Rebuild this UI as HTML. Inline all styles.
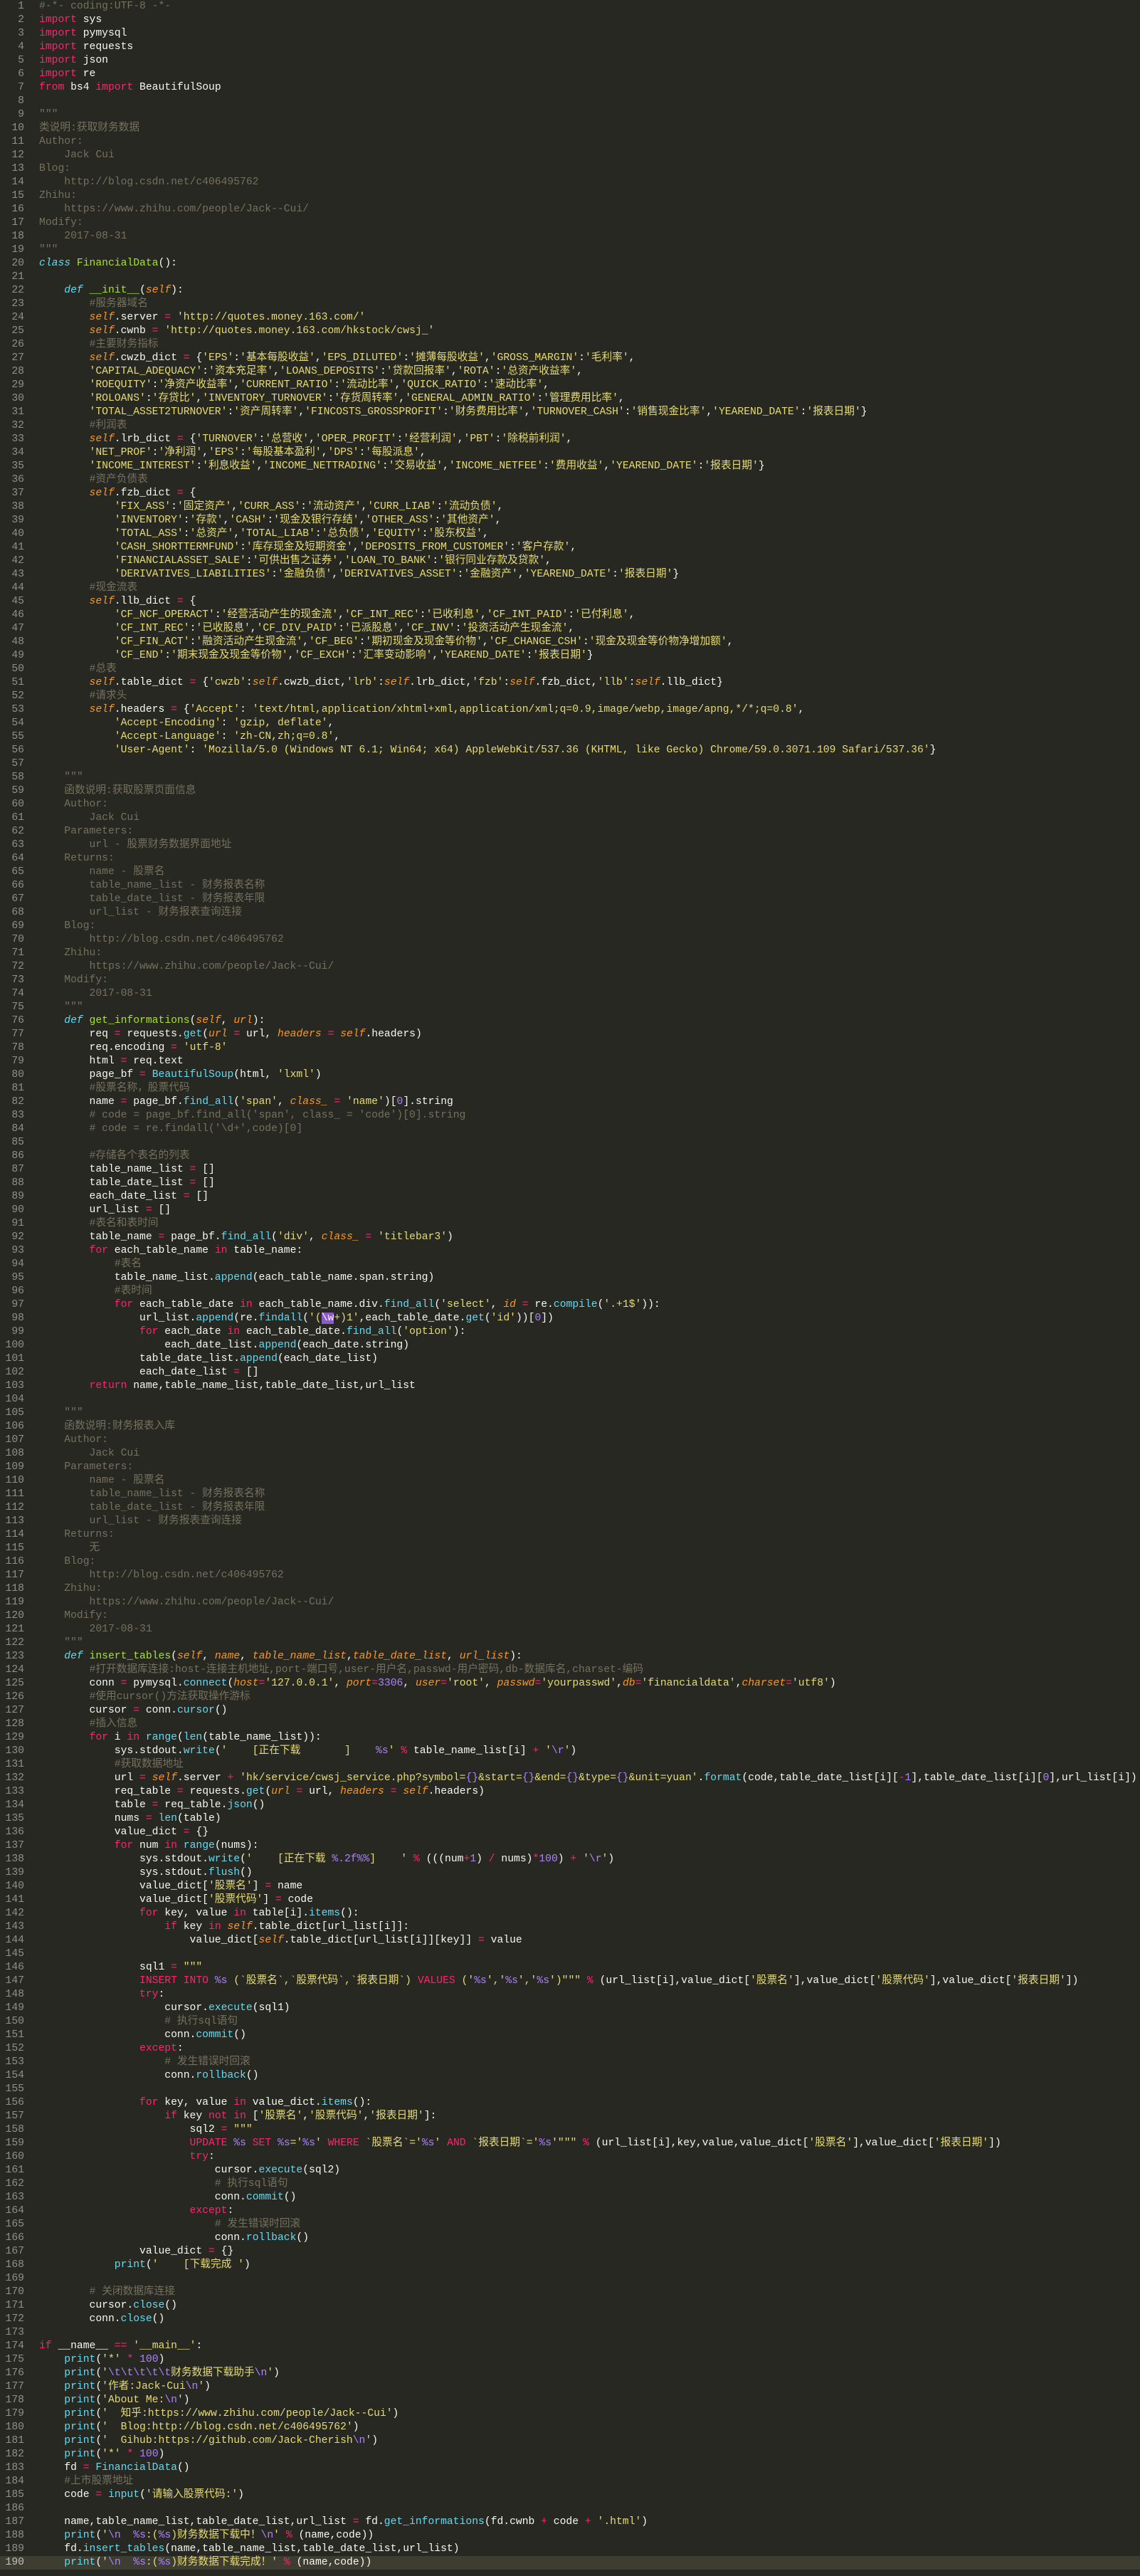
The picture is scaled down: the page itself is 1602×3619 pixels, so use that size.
<!DOCTYPE html>
<html><head><meta charset="utf-8">
<style>
html,body{margin:0;padding:0;background:#272822;}
body{width:1602px;height:3619px;position:relative;overflow:hidden;}
pre{margin:0;font-family:"Liberation Mono","Noto Sans CJK SC",monospace;font-size:14.7px;line-height:19px;position:absolute;top:0;}
#g{left:0;width:34px;text-align:right;color:#8f908a;}
#c{left:55px;color:#f8f8f2;}
#hl{position:absolute;left:0;top:3591px;width:1602px;height:19px;background:#3e3d32;}
.k{color:#f92672}.s{color:#e6db74}.c{color:#75715e}.f{color:#a6e22e}.b{color:#66d9ef}
.sf{color:#fd971f;font-style:italic}.n{color:#ae81ff}.d{color:#66d9ef;font-style:italic}
.sel{background:#8b5cc9;color:#f8f8f2}
</style></head><body>
<div id="hl"></div>
<pre id="g">1
2
3
4
5
6
7
8
9
10
11
12
13
14
15
16
17
18
19
20
21
22
23
24
25
26
27
28
29
30
31
32
33
34
35
36
37
38
39
40
41
42
43
44
45
46
47
48
49
50
51
52
53
54
55
56
57
58
59
60
61
62
63
64
65
66
67
68
69
70
71
72
73
74
75
76
77
78
79
80
81
82
83
84
85
86
87
88
89
90
91
92
93
94
95
96
97
98
99
100
101
102
103
104
105
106
107
108
109
110
111
112
113
114
115
116
117
118
119
120
121
122
123
124
125
126
127
128
129
130
131
132
133
134
135
136
137
138
139
140
141
142
143
144
145
146
147
148
149
150
151
152
153
154
155
156
157
158
159
160
161
162
163
164
165
166
167
168
169
170
171
172
173
174
175
176
177
178
179
180
181
182
183
184
185
186
187
188
189
<span style="color:#c2c2bf">190</span></pre>
<pre id="c"><span class="c">#-*- coding:UTF-8 -*-</span>
<span class="k">import</span> sys
<span class="k">import</span> pymysql
<span class="k">import</span> requests
<span class="k">import</span> json
<span class="k">import</span> re
<span class="k">from</span> bs4 <span class="k">import</span> BeautifulSoup

<span class="c">"""
类说明:获取财务数据
Author:
    Jack Cui
Blog:
    http://blog.csdn.net/c406495762
Zhihu:
    https://www.zhihu.com/people/Jack--Cui/
Modify:
    2017-08-31
"""</span>
<span class="d">class</span> <span class="f">FinancialData</span>():

    <span class="d">def</span> <span class="f">__init__</span>(<span class="sf">self</span>):
        <span class="c">#服务器域名</span>
        <span class="sf">self</span>.server <span class="k">=</span> <span class="s">'http://quotes.money.163.com/'</span>
        <span class="sf">self</span>.cwnb <span class="k">=</span> <span class="s">'http://quotes.money.163.com/hkstock/cwsj_'</span>
        <span class="c">#主要财务指标</span>
        <span class="sf">self</span>.cwzb_dict <span class="k">=</span> {<span class="s">'EPS'</span>:<span class="s">'基本每股收益'</span>,<span class="s">'EPS_DILUTED'</span>:<span class="s">'摊薄每股收益'</span>,<span class="s">'GROSS_MARGIN'</span>:<span class="s">'毛利率'</span>,
        <span class="s">'CAPITAL_ADEQUACY'</span>:<span class="s">'资本充足率'</span>,<span class="s">'LOANS_DEPOSITS'</span>:<span class="s">'贷款回报率'</span>,<span class="s">'ROTA'</span>:<span class="s">'总资产收益率'</span>,
        <span class="s">'ROEQUITY'</span>:<span class="s">'净资产收益率'</span>,<span class="s">'CURRENT_RATIO'</span>:<span class="s">'流动比率'</span>,<span class="s">'QUICK_RATIO'</span>:<span class="s">'速动比率'</span>,
        <span class="s">'ROLOANS'</span>:<span class="s">'存贷比'</span>,<span class="s">'INVENTORY_TURNOVER'</span>:<span class="s">'存货周转率'</span>,<span class="s">'GENERAL_ADMIN_RATIO'</span>:<span class="s">'管理费用比率'</span>,
        <span class="s">'TOTAL_ASSET2TURNOVER'</span>:<span class="s">'资产周转率'</span>,<span class="s">'FINCOSTS_GROSSPROFIT'</span>:<span class="s">'财务费用比率'</span>,<span class="s">'TURNOVER_CASH'</span>:<span class="s">'销售现金比率'</span>,<span class="s">'YEAREND_DATE'</span>:<span class="s">'报表日期'</span>}
        <span class="c">#利润表</span>
        <span class="sf">self</span>.lrb_dict <span class="k">=</span> {<span class="s">'TURNOVER'</span>:<span class="s">'总营收'</span>,<span class="s">'OPER_PROFIT'</span>:<span class="s">'经营利润'</span>,<span class="s">'PBT'</span>:<span class="s">'除税前利润'</span>,
        <span class="s">'NET_PROF'</span>:<span class="s">'净利润'</span>,<span class="s">'EPS'</span>:<span class="s">'每股基本盈利'</span>,<span class="s">'DPS'</span>:<span class="s">'每股派息'</span>,
        <span class="s">'INCOME_INTEREST'</span>:<span class="s">'利息收益'</span>,<span class="s">'INCOME_NETTRADING'</span>:<span class="s">'交易收益'</span>,<span class="s">'INCOME_NETFEE'</span>:<span class="s">'费用收益'</span>,<span class="s">'YEAREND_DATE'</span>:<span class="s">'报表日期'</span>}
        <span class="c">#资产负债表</span>
        <span class="sf">self</span>.fzb_dict <span class="k">=</span> {
            <span class="s">'FIX_ASS'</span>:<span class="s">'固定资产'</span>,<span class="s">'CURR_ASS'</span>:<span class="s">'流动资产'</span>,<span class="s">'CURR_LIAB'</span>:<span class="s">'流动负债'</span>,
            <span class="s">'INVENTORY'</span>:<span class="s">'存款'</span>,<span class="s">'CASH'</span>:<span class="s">'现金及银行存结'</span>,<span class="s">'OTHER_ASS'</span>:<span class="s">'其他资产'</span>,
            <span class="s">'TOTAL_ASS'</span>:<span class="s">'总资产'</span>,<span class="s">'TOTAL_LIAB'</span>:<span class="s">'总负债'</span>,<span class="s">'EQUITY'</span>:<span class="s">'股东权益'</span>,
            <span class="s">'CASH_SHORTTERMFUND'</span>:<span class="s">'库存现金及短期资金'</span>,<span class="s">'DEPOSITS_FROM_CUSTOMER'</span>:<span class="s">'客户存款'</span>,
            <span class="s">'FINANCIALASSET_SALE'</span>:<span class="s">'可供出售之证券'</span>,<span class="s">'LOAN_TO_BANK'</span>:<span class="s">'银行同业存款及贷款'</span>,
            <span class="s">'DERIVATIVES_LIABILITIES'</span>:<span class="s">'金融负债'</span>,<span class="s">'DERIVATIVES_ASSET'</span>:<span class="s">'金融资产'</span>,<span class="s">'YEAREND_DATE'</span>:<span class="s">'报表日期'</span>}
        <span class="c">#现金流表</span>
        <span class="sf">self</span>.llb_dict <span class="k">=</span> {
            <span class="s">'CF_NCF_OPERACT'</span>:<span class="s">'经营活动产生的现金流'</span>,<span class="s">'CF_INT_REC'</span>:<span class="s">'已收利息'</span>,<span class="s">'CF_INT_PAID'</span>:<span class="s">'已付利息'</span>,
            <span class="s">'CF_INT_REC'</span>:<span class="s">'已收股息'</span>,<span class="s">'CF_DIV_PAID'</span>:<span class="s">'已派股息'</span>,<span class="s">'CF_INV'</span>:<span class="s">'投资活动产生现金流'</span>,
            <span class="s">'CF_FIN_ACT'</span>:<span class="s">'融资活动产生现金流'</span>,<span class="s">'CF_BEG'</span>:<span class="s">'期初现金及现金等价物'</span>,<span class="s">'CF_CHANGE_CSH'</span>:<span class="s">'现金及现金等价物净增加额'</span>,
            <span class="s">'CF_END'</span>:<span class="s">'期末现金及现金等价物'</span>,<span class="s">'CF_EXCH'</span>:<span class="s">'汇率变动影响'</span>,<span class="s">'YEAREND_DATE'</span>:<span class="s">'报表日期'</span>}
        <span class="c">#总表</span>
        <span class="sf">self</span>.table_dict <span class="k">=</span> {<span class="s">'cwzb'</span>:<span class="sf">self</span>.cwzb_dict,<span class="s">'lrb'</span>:<span class="sf">self</span>.lrb_dict,<span class="s">'fzb'</span>:<span class="sf">self</span>.fzb_dict,<span class="s">'llb'</span>:<span class="sf">self</span>.llb_dict}
        <span class="c">#请求头</span>
        <span class="sf">self</span>.headers <span class="k">=</span> {<span class="s">'Accept'</span>: <span class="s">'text/html,application/xhtml+xml,application/xml;q=0.9,image/webp,image/apng,*/*;q=0.8'</span>,
            <span class="s">'Accept-Encoding'</span>: <span class="s">'gzip, deflate'</span>,
            <span class="s">'Accept-Language'</span>: <span class="s">'zh-CN,zh;q=0.8'</span>,
            <span class="s">'User-Agent'</span>: <span class="s">'Mozilla/5.0 (Windows NT 6.1; Win64; x64) AppleWebKit/537.36 (KHTML, like Gecko) Chrome/59.0.3071.109 Safari/537.36'</span>}

    <span class="c">"""
    函数说明:获取股票页面信息
    Author:
        Jack Cui
    Parameters:
        url - 股票财务数据界面地址
    Returns:
        name - 股票名
        table_name_list - 财务报表名称
        table_date_list - 财务报表年限
        url_list - 财务报表查询连接
    Blog:
        http://blog.csdn.net/c406495762
    Zhihu:
        https://www.zhihu.com/people/Jack--Cui/
    Modify:
        2017-08-31
    """</span>
    <span class="d">def</span> <span class="f">get_informations</span>(<span class="sf">self</span>, <span class="sf">url</span>):
        req <span class="k">=</span> requests.<span class="b">get</span>(<span class="sf">url</span> <span class="k">=</span> url, <span class="sf">headers</span> <span class="k">=</span> <span class="sf">self</span>.headers)
        req.encoding <span class="k">=</span> <span class="s">'utf-8'</span>
        html <span class="k">=</span> req.text
        page_bf <span class="k">=</span> <span class="b">BeautifulSoup</span>(html, <span class="s">'lxml'</span>)
        <span class="c">#股票名称，股票代码</span>
        name <span class="k">=</span> page_bf.<span class="b">find_all</span>(<span class="s">'span'</span>, <span class="sf">class_</span> <span class="k">=</span> <span class="s">'name'</span>)[<span class="n">0</span>].string
        <span class="c"># code = page_bf.find_all('span', class_ = 'code')[0].string</span>
        <span class="c"># code = re.findall('\d+',code)[0]</span>

        <span class="c">#存储各个表名的列表</span>
        table_name_list <span class="k">=</span> []
        table_date_list <span class="k">=</span> []
        each_date_list <span class="k">=</span> []
        url_list <span class="k">=</span> []
        <span class="c">#表名和表时间</span>
        table_name <span class="k">=</span> page_bf.<span class="b">find_all</span>(<span class="s">'div'</span>, <span class="sf">class_</span> <span class="k">=</span> <span class="s">'titlebar3'</span>)
        <span class="k">for</span> each_table_name <span class="k">in</span> table_name:
            <span class="c">#表名</span>
            table_name_list.<span class="b">append</span>(each_table_name.span.string)
            <span class="c">#表时间</span>
            <span class="k">for</span> each_table_date <span class="k">in</span> each_table_name.div.<span class="b">find_all</span>(<span class="s">'select'</span>, <span class="sf">id</span> <span class="k">=</span> re.<span class="b">compile</span>(<span class="s">'.+1$'</span>)):
                url_list.<span class="b">append</span>(re.<span class="b">findall</span>(<span class="s">'(<span class="sel">\w</span>+)1'</span>,each_table_date.<span class="b">get</span>(<span class="s">'id'</span>))[<span class="n">0</span>])
                <span class="k">for</span> each_date <span class="k">in</span> each_table_date.<span class="b">find_all</span>(<span class="s">'option'</span>):
                    each_date_list.<span class="b">append</span>(each_date.string)
                table_date_list.<span class="b">append</span>(each_date_list)
                each_date_list <span class="k">=</span> []
        <span class="k">return</span> name,table_name_list,table_date_list,url_list

    <span class="c">"""
    函数说明:财务报表入库
    Author:
        Jack Cui
    Parameters:
        name - 股票名
        table_name_list - 财务报表名称
        table_date_list - 财务报表年限
        url_list - 财务报表查询连接
    Returns:
        无
    Blog:
        http://blog.csdn.net/c406495762
    Zhihu:
        https://www.zhihu.com/people/Jack--Cui/
    Modify:
        2017-08-31
    """</span>
    <span class="d">def</span> <span class="f">insert_tables</span>(<span class="sf">self</span>, <span class="sf">name</span>, <span class="sf">table_name_list</span>,<span class="sf">table_date_list</span>, <span class="sf">url_list</span>):
        <span class="c">#打开数据库连接:host-连接主机地址,port-端口号,user-用户名,passwd-用户密码,db-数据库名,charset-编码</span>
        conn <span class="k">=</span> pymysql.<span class="b">connect</span>(<span class="sf">host</span><span class="k">=</span><span class="s">'127.0.0.1'</span>, <span class="sf">port</span><span class="k">=</span><span class="n">3306</span>, <span class="sf">user</span><span class="k">=</span><span class="s">'root'</span>, <span class="sf">passwd</span><span class="k">=</span><span class="s">'yourpasswd'</span>,<span class="sf">db</span><span class="k">=</span><span class="s">'financialdata'</span>,<span class="sf">charset</span><span class="k">=</span><span class="s">'utf8'</span>)
        <span class="c">#使用cursor()方法获取操作游标</span>
        cursor <span class="k">=</span> conn.<span class="b">cursor</span>()
        <span class="c">#插入信息</span>
        <span class="k">for</span> i <span class="k">in</span> <span class="b">range</span>(<span class="b">len</span>(table_name_list)):
            sys.stdout.<span class="b">write</span>(<span class="s">'    [正在下载       ]    <span class="n">%s</span>'</span> <span class="k">%</span> table_name_list[i] <span class="k">+</span> <span class="s">'<span class="n">\r</span>'</span>)
            <span class="c">#获取数据地址</span>
            url <span class="k">=</span> <span class="sf">self</span>.server <span class="k">+</span> <span class="s">'hk/service/cwsj_service.php?symbol=<span class="n">{}</span>&amp;start=<span class="n">{}</span>&amp;end=<span class="n">{}</span>&amp;type=<span class="n">{}</span>&amp;unit=yuan'</span>.<span class="b">format</span>(code,table_date_list[i][<span class="k">-</span><span class="n">1</span>],table_date_list[i][<span class="n">0</span>],url_list[i])
            req_table <span class="k">=</span> requests.<span class="b">get</span>(<span class="sf">url</span> <span class="k">=</span> url, <span class="sf">headers</span> <span class="k">=</span> <span class="sf">self</span>.headers)
            table <span class="k">=</span> req_table.<span class="b">json</span>()
            nums <span class="k">=</span> <span class="b">len</span>(table)
            value_dict <span class="k">=</span> {}
            <span class="k">for</span> num <span class="k">in</span> <span class="b">range</span>(nums):
                sys.stdout.<span class="b">write</span>(<span class="s">'    [正在下载 <span class="n">%.2f%%</span>]    '</span> <span class="k">%</span> (((num<span class="k">+</span><span class="n">1</span>) <span class="k">/</span> nums)<span class="k">*</span><span class="n">100</span>) <span class="k">+</span> <span class="s">'<span class="n">\r</span>'</span>)
                sys.stdout.<span class="b">flush</span>()
                value_dict[<span class="s">'股票名'</span>] <span class="k">=</span> name
                value_dict[<span class="s">'股票代码'</span>] <span class="k">=</span> code
                <span class="k">for</span> key, value <span class="k">in</span> table[i].<span class="b">items</span>():
                    <span class="k">if</span> key <span class="k">in</span> <span class="sf">self</span>.table_dict[url_list[i]]:
                        value_dict[<span class="sf">self</span>.table_dict[url_list[i]][key]] <span class="k">=</span> value

                sql1 <span class="k">=</span> <span class="s">"""</span>
                <span class="k">INSERT INTO</span> <span class="n">%s</span> <span class="s">(`股票名`,`股票代码`,`报表日期`)</span> <span class="k">VALUES</span> <span class="s">('<span class="n">%s</span>','<span class="n">%s</span>','<span class="n">%s</span>')"""</span> <span class="k">%</span> (url_list[i],value_dict[<span class="s">'股票名'</span>],value_dict[<span class="s">'股票代码'</span>],value_dict[<span class="s">'报表日期'</span>])
                <span class="k">try</span>:
                    cursor.<span class="b">execute</span>(sql1)
                    <span class="c"># 执行sql语句</span>
                    conn.<span class="b">commit</span>()
                <span class="k">except</span>:
                    <span class="c"># 发生错误时回滚</span>
                    conn.<span class="b">rollback</span>()

                <span class="k">for</span> key, value <span class="k">in</span> value_dict.<span class="b">items</span>():
                    <span class="k">if</span> key <span class="k">not</span> <span class="k">in</span> [<span class="s">'股票名'</span>,<span class="s">'股票代码'</span>,<span class="s">'报表日期'</span>]:
                        sql2 <span class="k">=</span> <span class="s">"""</span>
                        <span class="k">UPDATE</span> <span class="n">%s</span> <span class="k">SET</span> <span class="n">%s</span><span class="s">='<span class="n">%s</span>'</span> <span class="k">WHERE</span> <span class="s">`股票名`='<span class="n">%s</span>'</span> <span class="k">AND</span> <span class="s">`报表日期`='<span class="n">%s</span>'"""</span> <span class="k">%</span> (url_list[i],key,value,value_dict[<span class="s">'股票名'</span>],value_dict[<span class="s">'报表日期'</span>])
                        <span class="k">try</span>:
                            cursor.<span class="b">execute</span>(sql2)
                            <span class="c"># 执行sql语句</span>
                            conn.<span class="b">commit</span>()
                        <span class="k">except</span>:
                            <span class="c"># 发生错误时回滚</span>
                            conn.<span class="b">rollback</span>()
                value_dict <span class="k">=</span> {}
            <span class="b">print</span>(<span class="s">'    [下载完成 '</span>)

        <span class="c"># 关闭数据库连接</span>
        cursor.<span class="b">close</span>()
        conn.<span class="b">close</span>()

<span class="k">if</span> __name__ <span class="k">==</span> <span class="s">'__main__'</span>:
    <span class="b">print</span>(<span class="s">'*'</span> <span class="k">*</span> <span class="n">100</span>)
    <span class="b">print</span>(<span class="s">'<span class="n">\t\t\t\t\t</span>财务数据下载助手<span class="n">\n</span>'</span>)
    <span class="b">print</span>(<span class="s">'作者:Jack-Cui<span class="n">\n</span>'</span>)
    <span class="b">print</span>(<span class="s">'About Me:<span class="n">\n</span>'</span>)
    <span class="b">print</span>(<span class="s">'  知乎:https://www.zhihu.com/people/Jack--Cui'</span>)
    <span class="b">print</span>(<span class="s">'  Blog:http://blog.csdn.net/c406495762'</span>)
    <span class="b">print</span>(<span class="s">'  Gihub:https://github.com/Jack-Cherish<span class="n">\n</span>'</span>)
    <span class="b">print</span>(<span class="s">'*'</span> <span class="k">*</span> <span class="n">100</span>)
    fd <span class="k">=</span> <span class="b">FinancialData</span>()
    <span class="c">#上市股票地址</span>
    code <span class="k">=</span> <span class="b">input</span>(<span class="s">'请输入股票代码:'</span>)

    name,table_name_list,table_date_list,url_list <span class="k">=</span> fd.<span class="b">get_informations</span>(fd.cwnb <span class="k">+</span> code <span class="k">+</span> <span class="s">'.html'</span>)
    <span class="b">print</span>(<span class="s">'<span class="n">\n</span>  <span class="n">%s</span>:(<span class="n">%s</span>)财务数据下载中！<span class="n">\n</span>'</span> <span class="k">%</span> (name,code))
    fd.<span class="b">insert_tables</span>(name,table_name_list,table_date_list,url_list)
    <span class="b">print</span>(<span class="s">'<span class="n">\n</span>  <span class="n">%s</span>:(<span class="n">%s</span>)财务数据下载完成！'</span> <span class="k">%</span> (name,code))</pre>
</body></html>
